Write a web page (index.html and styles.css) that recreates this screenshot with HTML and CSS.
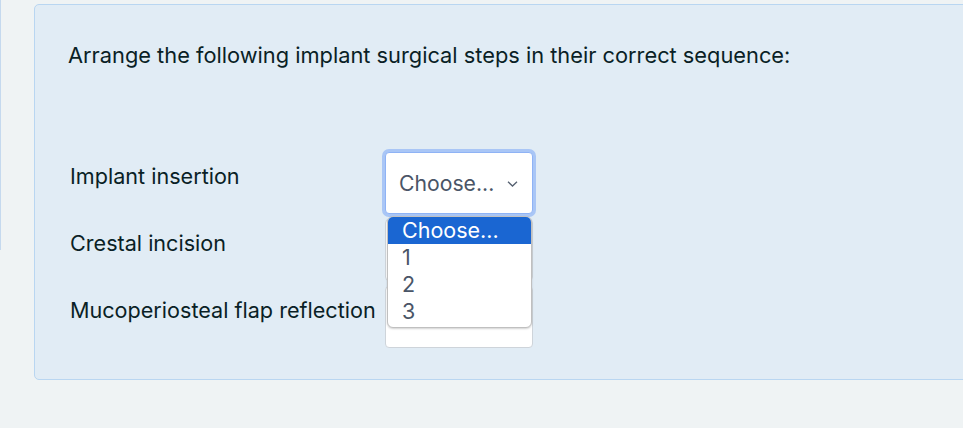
FILE: index.html
```html
<!DOCTYPE html>
<html>
<head>
<meta charset="utf-8">
<link rel="stylesheet" href="styles.css">
</head>
<body>
<div class="page">
  <div class="side-line"></div>
  <div class="card">
    <p class="qtext">Arrange the following implant surgical steps in their correct sequence:</p>
    <div class="rows">
      <div class="row">
        <span class="label">Implant insertion</span>
        <div class="select focused">
          <span class="sel-text">Choose...</span>
          <svg class="chev" width="11" height="6" viewBox="0 0 11 6"><path d="M1 0.8 L5.5 5 L10 0.8" fill="none" stroke="#556070" stroke-width="1.3"/></svg>
        </div>
        <div class="dropdown">
          <div class="opt active">Choose...</div>
          <div class="opt">1</div>
          <div class="opt">2</div>
          <div class="opt">3</div>
        </div>
      </div>
      <div class="row">
        <span class="label">Crestal incision</span>
        <div class="select"></div>
      </div>
      <div class="row">
        <span class="label">Mucoperiosteal flap reflection</span>
        <div class="select"></div>
      </div>
    </div>
  </div>
</div>
</body>
</html>
```

FILE: styles.css
```css
html, body {
  margin: 0;
  padding: 0;
  background: #eff3f4;
  overflow: hidden;
  width: 963px;
  height: 428px;
}
.page {
  display: flex;
  align-items: flex-start;
  font-family: Inter, "Noto Sans", sans-serif;
  color: #0a1f26;
}
.side-line {
  width: 0;
  height: 250px;
  border-left: 1px solid #c5d9ee;
  flex: none;
}
.card {
  flex: none;
  margin-left: 33px;
  margin-top: 4px;
  width: 1000px;
  height: 376px;
  box-sizing: border-box;
  background: #e1ecf5;
  border: 1px solid #b9d6f1;
  border-radius: 5px;
  padding: 37px 0 0 33px;
}
.qtext {
  margin: 0;
  font-size: 21.8px;
  line-height: 26px;
}
.rows {
  margin-top: 84px;
  display: flex;
  flex-direction: column;
  gap: 5px;
}
.row {
  position: relative;
  display: grid;
  grid-template-columns: 317px 148px;
  align-items: start;
}
.label {
  padding-left: 2px;
  padding-top: 11px;
  font-size: 21.6px;
  line-height: 26px;
  white-space: nowrap;
}
.select {
  height: 62px;
  box-sizing: border-box;
  background: #fff;
  border: 1px solid #ced4da;
  border-radius: 4px;
  display: flex;
  align-items: center;
  padding: 0 14px 0 13px;
  justify-content: space-between;
  color: #4a5567;
  font-size: 21.2px;
}
.select.focused {
  border-color: #8fb3f5;
  box-shadow: 0 0 0 3px #a9c6f6;
}
.chev {
  margin-top: 2px;
}
.dropdown {
  position: absolute;
  left: 319px;
  top: 64px;
  width: 145px;
  box-sizing: border-box;
  background: #fff;
  border: 1px solid #c0c0c0;
  border-radius: 6px;
  box-shadow: 0 1px 2px rgba(0,0,0,0.18);
  overflow: hidden;
  padding-bottom: 2px;
  z-index: 2;
}
.opt {
  height: 27px;
  line-height: 27px;
  padding-left: 14px;
  font-size: 21.5px;
  color: #4a5567;
}
.opt.active {
  background: #1a66d2;
  color: #fff;
}
```
